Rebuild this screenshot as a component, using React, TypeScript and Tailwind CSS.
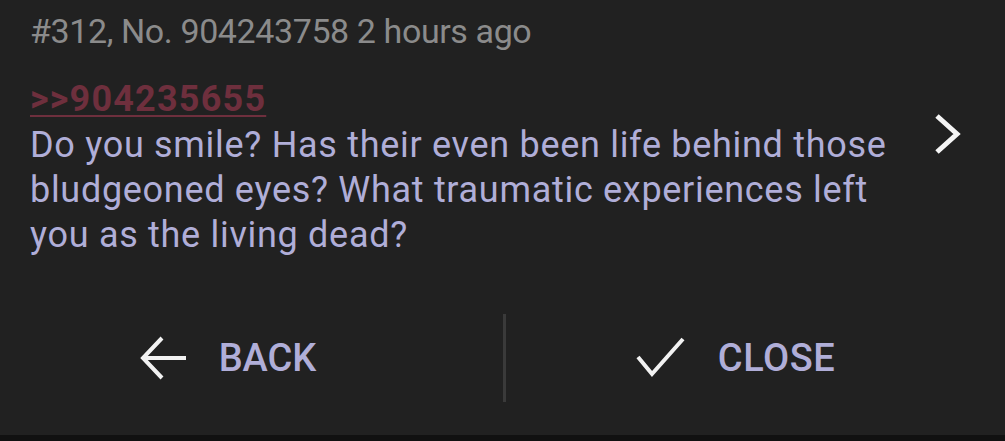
import React from 'react';

const ArrowBack = () => (
  <svg width="48" height="48" viewBox="0 0 48 48" fill="none" stroke="#f2f2f2" strokeWidth="4" strokeLinecap="square">
    <path d="M45 24H6" />
    <path d="M23 4L4 24L23 44" strokeLinecap="butt" />
  </svg>
);

const Check = () => (
  <svg width="50" height="42" viewBox="0 0 50 42" fill="none" stroke="#f2f2f2" strokeWidth="4">
    <path d="M2 20L16 37L47 2" />
  </svg>
);

const ChevronRight = () => (
  <svg width="30" height="42" viewBox="0 0 30 42" fill="none" stroke="#f5f5f5" strokeWidth="5">
    <path d="M4 3L24 21L4 39" />
  </svg>
);

const App: React.FC = () => {
  return (
    <div
      className="w-[1005px] h-[441px] bg-[#212121] flex flex-col overflow-hidden"
      style={{ fontFamily: 'Roboto, "Noto Sans", sans-serif' }}
    >
      <div className="flex-1 px-[30px] pt-[9px]">
        <div className="text-[34px] leading-[44px] tracking-[-0.4px] text-[#8b8b8b]">
          #312, No. 904243758 2 hours ago
        </div>

        <div className="mt-[24px] text-[36px] leading-[44px] tracking-[1.2px] font-bold text-[#6e2f3d] underline decoration-2 underline-offset-[4px]">
          &gt;&gt;904235655
        </div>

        <div className="flex items-start">
          <p className="mt-[2px] w-[880px] text-[36px] leading-[45px] tracking-[0.7px] text-[#b0aed8]">
            Do you smile? Has their even been life behind those bludgeoned eyes? What traumatic
            experiences left you as the living dead?
          </p>
          <div className="ml-[23px] mt-[-8px]">
            <ChevronRight />
          </div>
        </div>
      </div>

      <div className="h-[88px] flex">
        <button className="w-[503px] flex items-center justify-center gap-[32px] pr-[48px]">
          <ArrowBack />
          <span className="text-[38px] font-medium text-[#b0aed8]">BACK</span>
        </button>
        <div className="w-[3px] bg-[#3a3a3a]" />
        <button className="flex-1 flex items-center justify-center gap-[32px] pr-[40px]">
          <Check />
          <span className="text-[38px] font-medium tracking-[0.5px] text-[#b0aed8]">CLOSE</span>
        </button>
      </div>

      <div className="h-[33px]" />
      <div className="h-[6px] bg-[#111111]" />
    </div>
  );
};

export default App;
